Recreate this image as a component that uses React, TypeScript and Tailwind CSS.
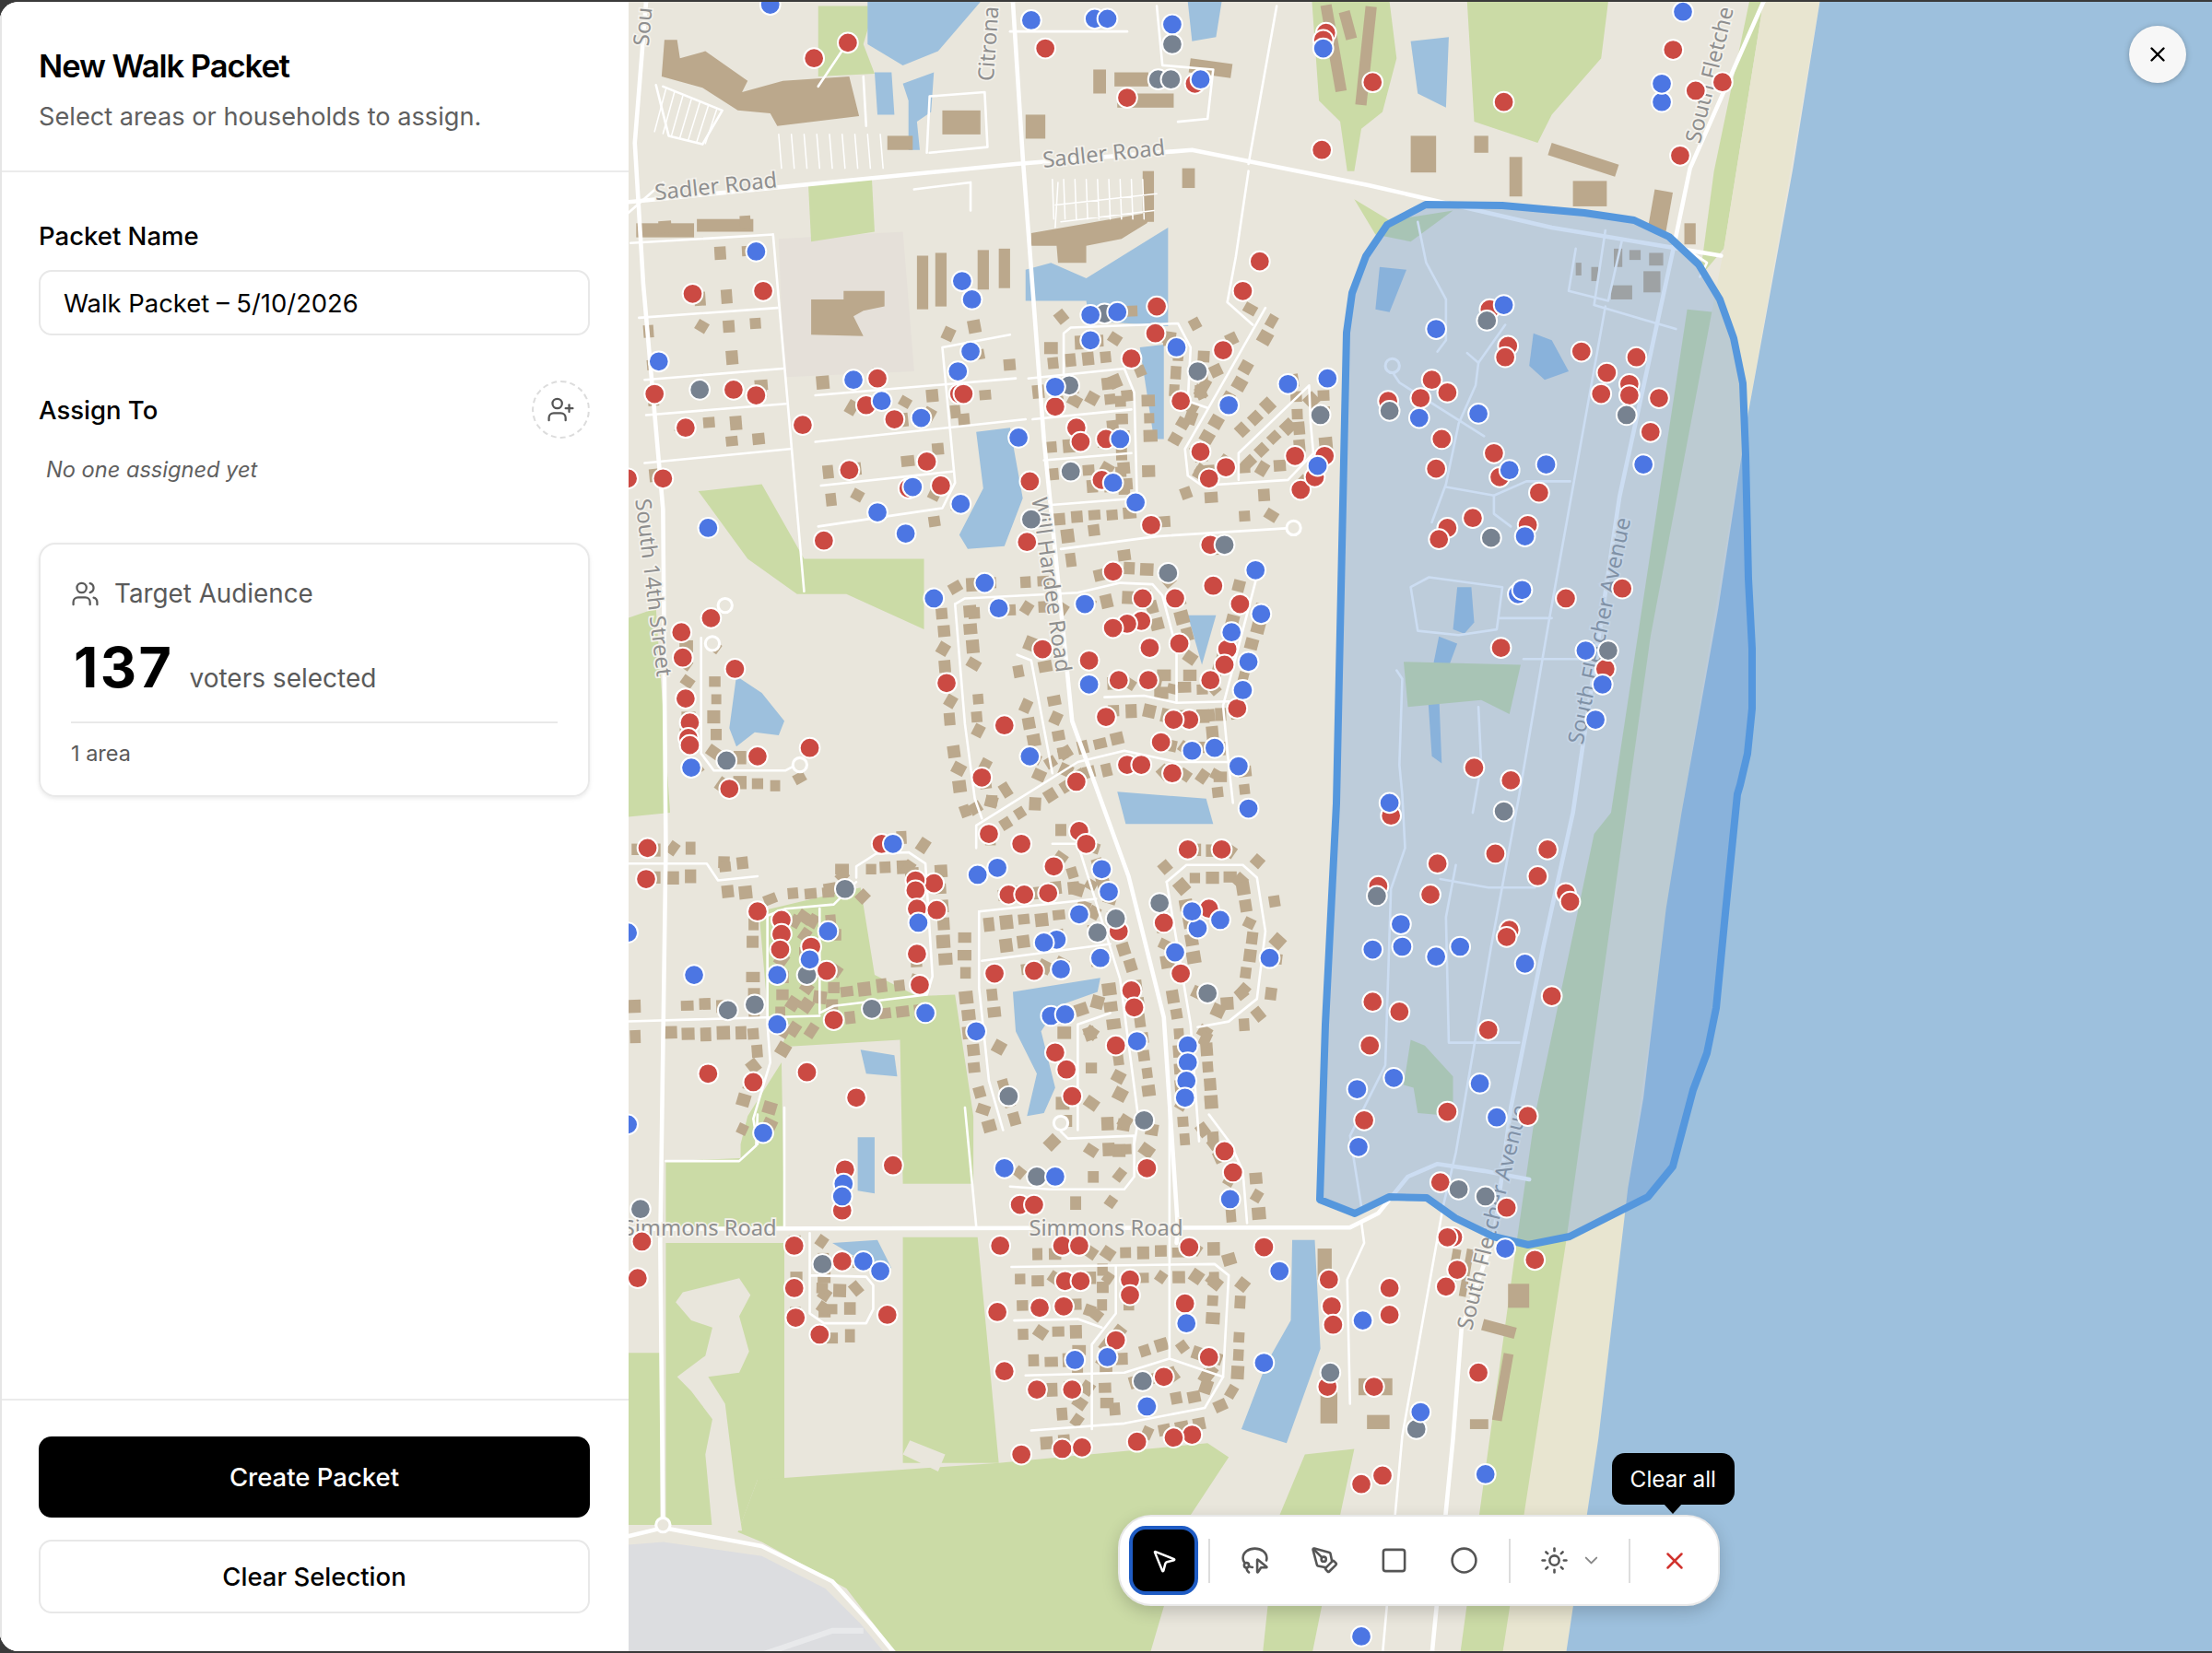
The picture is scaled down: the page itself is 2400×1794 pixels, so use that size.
import { ChevronDown, Circle, LassoSelect, MousePointer2, PenTool, Square, Sun, UserPlus, Users, X } from 'lucide-react'

// all map data is in a 1568-wide space, the svg group scales it up to the page
const K = 1.5306

const RED = [577,40,601,29,741,33,799,68,847,58,940,22,938,27,973,57,1066,71,937,105,1186,34,1202,63,1221,57,1191,109,491,207,541,205,893,184,881,205,820,216,819,235,867,247,802,253,464,278,520,275,536,279,622,267,614,286,634,296,680,278,683,278,763,302,748,287,766,312,784,310,486,302,569,300,602,332,657,326,644,345,667,343,730,340,851,319,857,338,869,330,918,322,939,322,922,346,932,337,837,283,781,339,445,338,470,338,584,382,728,383,816,371,858,385,789,404,860,414,833,423,879,427,810,423,809,439,799,441,789,444,739,459,815,458,836,455,772,467,870,459,868,470,793,481,814,481,671,483,858,481,877,501,784,507,712,513,843,509,832,509,823,525,483,447,504,437,484,465,521,473,486,494,489,511,488,522,489,527,574,529,537,535,517,558,799,541,809,541,831,547,696,550,763,553,701,590,765,588,770,597,724,597,747,613,842,601,866,601,625,597,459,600,458,622,662,625,649,623,649,630,650,643,664,644,715,633,726,633,743,632,857,643,825,653,793,659,537,645,554,651,554,661,553,672,575,670,586,687,650,675,652,697,705,689,733,687,802,701,837,689,804,713,591,722,791,740,502,760,572,759,534,766,607,777,756,757,748,745,760,776,813,827,868,815,874,830,633,825,599,828,597,857,723,853,733,853,455,879,452,905,563,882,597,893,563,912,629,931,564,933,581,945,709,882,753,882,765,882,843,883,896,883,755,907,766,907,801,906,801,917,840,923,707,929,737,926,754,925,791,949,857,961,712,971,735,984,760,984,825,975,845,1016,832,1018,724,1030,753,1026,767,1025,806,1021,965,1051,980,1045,1056,218,1069,244,1067,252,1121,248,1160,252,1139,263,1155,271,1155,279,1135,278,1176,281,1170,305,1015,268,1026,277,984,283,1007,281,1022,310,1018,331,1059,320,1063,337,1091,348,1044,366,1083,371,1026,373,1020,381,1110,423,1150,416,1064,458,1138,473,1045,543,1071,552,1097,601,1019,611,1060,604,986,577,1090,620,977,627,1014,633,1110,632,1113,638,1070,658,1068,663,1100,705,992,716,973,709,1055,729,971,740,967,793,1026,787,1083,790,1021,837,1068,855,1088,892,1030,876,1026,876,1033,899,1025,911,942,906,944,925,945,938,985,912,985,931,1048,972,941,982,974,982]
const BLUE = [546,2,731,13,776,12,785,12,831,16,851,55,938,33,1193,7,1178,71,1178,58,536,177,682,198,689,211,467,255,773,222,792,220,773,240,834,245,688,248,679,262,605,268,625,283,653,295,748,273,871,286,913,271,941,267,722,309,794,310,647,344,681,356,622,362,789,341,805,355,642,377,502,373,934,329,698,412,662,423,708,430,769,427,890,403,894,434,873,447,885,468,881,488,772,484,845,531,861,529,878,542,730,535,490,543,885,572,633,597,781,615,707,614,693,619,786,631,749,665,740,667,765,647,849,657,865,651,845,645,587,659,651,653,574,679,551,690,752,686,780,678,900,678,833,674,492,690,551,725,656,717,692,730,745,719,755,718,806,737,842,740,842,752,841,765,840,777,541,802,445,660,445,796,598,838,597,847,712,827,748,833,872,849,612,893,624,900,907,900,841,937,762,963,785,961,896,965,813,996,966,935,1007,1000,1053,1044,965,1159,1066,215,1018,232,1048,292,1006,295,1070,332,1096,328,1081,379,1165,328,1076,420,1079,417,1124,460,1136,484,1131,509,985,568,993,654,973,672,1035,670,994,670,1018,677,1081,682,962,771,988,763,1049,767,1061,791,963,812,1067,884]
const GRAY = [831,30,821,55,830,55,783,221,849,262,758,272,496,275,936,293,759,333,731,367,868,385,828,405,515,538,599,629,822,639,791,650,778,660,572,690,516,715,535,711,618,714,856,703,715,776,811,793,735,833,454,856,583,895,810,978,943,972,1004,1012,1054,226,985,290,1153,293,1057,380,1140,460,1066,574,976,634,1034,842,1053,847]

const MAIN_ROADS = [
  'M445 142 L720 115 L845 105 L970 130 L1100 160 L1220 180',
  'M718 0 L725 110 L740 310 L760 510 L800 620 L825 720 L835 870 L834 880',
  'M458 0 L450 100 L456 200 L470 360 L472 600 L468 880 L470 1080',
  'M445 870 L957 869 L977 859 L998 833 L1019 824 L1052 829 L1084 835',
  'M1250 0 L1198 118 L1186 176 L1148 351 L1115 575 L1094 670 L1071 784 L1059 875 L1036 941 L1030 1019 L1015 1172',
  'M445 1088 L470 1082 L540 1095 L590 1120 L617 1150 L635 1172',
]

const PLAIN_STREETS = [
  [1138,216,1098,439,1077,562,1057,670,1032,816,1023,854,994,1017,980,1172],
  [1005,156,1011,185,1025,211,1025,240,1019,248],
  [1040,249,1048,256,1067,229],
  [1048,256,1046,272,1034,299,1025,342,1015,369],
  [984,258,992,270,1052,308],
  [1025,344,1059,350,1082,340,1113,340],
  [1059,350,1059,363,1071,372],
  [1000,415,1013,408,1065,415,1061,445,1034,449,1005,446,1000,415],
  [1063,437,1100,437],
  [1080,466,1136,466],
  [990,474,994,480,992,541,994,562,996,600,986,629,982,754,973,772,957,804,965,854],
  [1048,500,1050,541,1044,575],
  [1032,612,1025,649,1027,738,1077,738],
  [1021,622,1055,628,1088,628],
  [965,865,967,880,955,906,957,994],
  [885,120,876,181,870,213,888,229],
  [1138,162,1130,215,1188,232],
  [556,784,556,868],
  [684,784,692,868],
  [829,784,829,962],
  [472,822,524,822,536,811,537,789],
  [548,165,570,418],
  [905,3,885,115],
  [820,3,824,45,860,48,856,83,835,85],
  [716,21,799,21],
  [657,107,659,67,698,64,700,103,659,107],
  [612,53,614,88],
  [648,133,688,128,688,148],
  [580,60,600,30],
  [470,128,445,150],
  [470,60,512,77,498,101,474,95,465,59],
  [1117,175,1112,205,1140,212,1150,168],
  [1188,170,1210,185,1205,195],
]

// few houses here, the old part of town
const SPARSE_STREETS = [
  [447,171,548,165],[453,224,551,217],[457,268,555,260],[458,293,557,285],[457,327,560,317],
  [578,279,720,267],[578,312,727,296],[582,343,675,333],
  [752,388,820,379,917,373],
  [580,372,668,359,677,341,668,245,716,236],
]

const HOUSE_STREETS = [
  [729,267,797,260,804,277,806,352,741,357],[732,296,802,289],[740,325,802,320],
  [754,264,754,235,759,231,835,228,844,245,842,283,856,288],
  [897,217,863,277,840,317,842,336,852,343,913,339,931,320,929,298,928,272,878,320,878,339],
  [677,427,684,423,764,419,794,412,817,413,824,421,834,459,834,496],
  [677,427,684,512,691,565,696,579],
  [692,600,692,584,764,539,797,531,834,539,871,539],
  [783,493,811,492,834,497,871,496],
  [890,411,867,499,871,541,874,568],
  [721,463,731,467,746,547],
  [607,621,607,613,621,604,644,603,656,611,661,691,657,704,591,712,581,717],
  [544,648,557,643,591,640,607,624],
  [544,648,544,725,546,752,534,792,537,810],
  [444,723,581,719],[581,643,581,717],
  [497,451,497,533,506,545,557,545,566,540],
  [446,611,501,611,509,623,537,620],
  [694,645,694,699,701,765,711,800],[694,645,777,636],[696,680,787,668],
  [746,597,764,597,794,693,807,792,804,810],
  [827,624,844,725,850,808],
  [827,624,841,612,881,612,891,621,897,659,891,707,871,723,849,727],
  [787,717,764,725,764,800],
  [716,840,744,842,797,842,804,833,804,804,757,806,752,801],
  [857,789,872,809,881,829,884,866],
  [717,897,861,895,871,903,867,975,854,997,797,1008,731,1013],
  [727,974,797,972,829,962,867,975],
  [774,1012,774,952,791,930,791,897],
  [719,935,764,934,781,940],
  [574,873,574,930,584,937,614,937,619,927,619,910,614,904,574,903],
]

const ROUNDABOUTS = [470,1080,917,373,514,428,987,258,752,795,567,541,505,455]

// houses strung along the residential streets, same seed every run
function makeHouses(streets: number[][], skip: number, step: number) {
  let seed = 71
  const rnd = () => {
    seed = (seed * 16807) % 2147483647
    return seed / 2147483647
  }
  const out: { x: number; y: number; w: number; h: number; a: number }[] = []
  streets.forEach((s) => {
    for (let i = 0; i + 3 < s.length; i += 2) {
      const dx = s[i + 2] - s[i]
      const dy = s[i + 3] - s[i + 1]
      const len = Math.hypot(dx, dy)
      const a = (Math.atan2(dy, dx) * 180) / Math.PI
      for (let d = 6; d < len; d += step) {
        for (const side of [-1, 1]) {
          if (rnd() < skip) continue
          const t = d / len
          const off = 8.5 + rnd() * 2.5
          out.push({
            x: s[i] + dx * t + (side * off * -dy) / len,
            y: s[i + 1] + dy * t + (side * off * dx) / len,
            w: 7 + rnd() * 2.5,
            h: 7 + rnd() * 3,
            a: a + (rnd() < 0.2 ? 35 : 0),
          })
        }
      }
    }
  })
  return out
}

const HOUSES = [...makeHouses(HOUSE_STREETS, 0.25, 12.5), ...makeHouses(SPARSE_STREETS, 0.6, 19)]

const lots: string[] = []
for (let i = 0; i < 9; i++) {
  lots.push(`M${552 + i * 9} 94 l2 24`)
  lots.push(`M${746 + i * 8} 126 l1 28`)
}
for (let i = 0; i < 7; i++) lots.push(`M${472 + i * 6} ${62 + i * 2.4} l-8 ${30 - i}`)
lots.push('M748 144 L820 136 M752 156 L818 148 M750 128 L748 160')

function Dots({ list, fill }: { list: number[]; fill: string }) {
  const dots = []
  for (let i = 0; i < list.length; i += 2) {
    dots.push(<circle key={i} cx={list[i]} cy={list[i + 1]} r={7.1} fill={fill} stroke="#fff" strokeWidth={1.3} />)
  }
  return <g>{dots}</g>
}

function Label({ x, y, r, children }: { x: number; y: number; r: number; children: string }) {
  return (
    <text
      x={x}
      y={y}
      transform={`rotate(${r} ${x} ${y})`}
      textAnchor="middle"
      fontSize={15.5}
      fill="#8f8f8f"
      stroke="#f4f2ec"
      strokeWidth={2.2}
      paintOrder="stroke"
      className="font-['Noto_Sans',sans-serif]"
    >
      {children}
    </text>
  )
}

function MapArt() {
  return (
    <svg viewBox="682 0 1718 1790" className="block h-full w-full" preserveAspectRatio="none">
      <g transform={`scale(${K})`}>
        <rect x="445" y="0" width="1123" height="1172" fill="#e9e6dc" />

        {/* school yard */}
        <path d="M552 168 L640 163 L648 262 L556 266 Z" fill="#e5e0d9" />

        {/* parks */}
        <g fill="#cbdba6">
          <path d="M580 3 L620 3 L612 30 L620 51 L580 53 Z" />
          <path d="M930 0 L985 0 L990 40 L980 78 L965 90 L960 120 L955 120 L950 85 L935 70 Z" />
          <path d="M1040 0 L1140 0 L1135 40 L1100 80 L1090 100 L1045 85 Z" />
          <path d="M573 130 L618 125 L620 163 L575 170 Z" />
          <path d="M960 140 L985 155 L1030 148 L1000 170 L975 165 Z" />
          <path d="M495 347 L540 342 L570 395 L655 395 L655 445 L600 420 L565 420 L530 395 Z" />
          <path d="M445 437 L465 430 L475 575 L445 578 Z" />
          <path d="M538 645 L610 628 L620 690 L650 705 L677 704 L690 790 L690 838 L640 838 L638 736 L554 741 L560 725 L545 725 Z" />
          <path d="M525 810 L530 790 L554 752 L556 868 L472 870 L472 822 L525 820 Z" />
          <path d="M640 876 L693 876 L708 1036 L640 1036 Z" />
          <path d="M472 880 L556 880 L556 1056 L537 1048 L525 1080 L472 1080 Z" />
          <path d="M445 958 L468 958 L468 1080 L445 1080 Z" />
          <path d="M537 1048 L708 1036 L856 1022 L871 1032 L844 1073 L815 1172 L636 1172 L600 1125 L540 1092 L523 1085 Z" />
          <path d="M925 1030 L960 1026 L950 1073 L930 1172 L895 1172 L905 1078 Z" />
          <path d="M1196 218 L1215 220 L1176 440 L1160 575 L1130 800 L1106 1010 L1075 1124 L1065 1172 L1035 1172 L1075 880 L1088 790 L1130 590 L1142 575 Z" />
          <path d="M1240 0 L1250 0 L1222 175 L1205 195 L1215 120 Z" />
        </g>

        {/* sand blobs in the south park */}
        <g fill="#e9e6dc">
          <path d="M479 922 L484 915 L524 905 L532 917 L524 932 L531 957 L524 972 L502 975 L514 994 L521 1051 L526 1084 L505 1084 L500 1030 L505 1005 L490 985 L480 975 L500 960 L505 940 L490 935 Z" />
          <path d="M640 1030 L645 1020 L670 1030 L665 1042 Z" />
        </g>

        {/* beach + sea */}
        <path d="M1250 0 L1290 0 L1239 293 L1192 575 L1154 841 L1133 1019 L1110 1172 L1065 1172 L1110 880 L1170 450 L1222 175 Z" fill="#e8e5d0" />
        <path d="M1290 0 L1568 0 L1568 1172 L1110 1172 L1133 1019 L1154 841 L1165 777 L1181 643 L1192 575 L1218 430 L1239 293 L1271 118 Z" fill="#9dc0dd" />

        {/* ponds and lakes */}
        <g fill="#9dc0dd">
          <path d="M615 0 L695 0 L665 35 L640 45 L615 30 Z" />
          <path d="M620 50 L632 50 L634 80 L622 80 Z M640 58 L662 50 L660 78 L650 85 L652 105 L644 105 L644 70 Z" />
          <path d="M842 0 L866 0 L862 25 L845 28 Z" />
          <path d="M1000 28 L1027 25 L1025 75 L1005 65 Z" />
          <path d="M727 190 L745 185 L770 196 L828 160 L828 230 L772 226 L770 212 L727 212 Z" />
          <path d="M808 245 L825 243 L825 310 L818 310 Z" />
          <path d="M692 305 L716 302 L725 352 L712 386 L686 388 L680 378 L697 345 Z" />
          <path d="M842 435 L862 435 L852 470 Z" />
          <path d="M522 478 L540 490 L556 510 L552 520 L535 518 L522 528 L517 515 Z" />
          <path d="M792 560 L855 565 L860 583 L798 583 Z" />
          <path d="M610 743 L634 747 L636 762 L614 760 Z" />
          <path d="M718 702 L780 692 L778 702 L750 712 L738 730 L748 770 L740 788 L728 790 L735 760 L720 730 Z" />
          <path d="M608 805 L620 805 L620 845 L608 843 Z" />
          <path d="M590 880 L622 878 L632 898 L610 892 Z" />
          <path d="M916 878 L932 878 L936 955 L912 1022 L880 1012 L898 965 L915 935 Z" />
          <path d="M978 188 L997 190 L985 220 L975 218 Z" />
          <path d="M1087 235 L1100 240 L1112 262 L1095 268 L1084 258 Z" />
          <path d="M1033 415 L1043 415 L1045 440 L1038 448 L1030 445 Z" />
          <path d="M1020 450 L1033 455 L1020 490 L1022 540 L1015 535 L1012 490 Z" />
        </g>

        {/* green strip inside the area */}
        <path d="M995 468 L1078 470 L1070 505 L1050 495 L998 500 Z" fill="#cbdba6" />
        <path d="M1000 736 L1010 740 L1030 762 L1030 790 L1005 788 L1002 770 L995 768 Z" fill="#cbdba6" />

        {/* buildings */}
        <g fill="#bba88c">
          <path d="M471 27 L480 27 L482 40 L500 35 L530 56 L526 64 L555 56 L602 53 L609 81 L551 88 L546 79 L523 77 L498 61 L469 53 Z" />
          <path d="M731 164 L817 149 L813 157 L795 168 L770 173 L770 185 L750 185 L749 173 L731 173 Z" />
          <path d="M575 211 L598 211 L598 205 L627 205 L627 216 L612 219 L605 223 L612 237 L575 236 Z" />
          <rect x="451" y="157" width="41" height="10" />
          <rect x="494" y="154" width="40" height="9" />
          <rect x="668" y="77" width="27" height="17" />
          <rect x="727" y="80" width="14" height="17" />
          <rect x="629" y="95" width="18" height="10" />
          <rect x="792" y="65" width="40" height="10" />
          <rect x="790" y="50" width="24" height="10" />
          <rect x="775" y="48" width="9" height="17" />
          <rect x="650" y="180" width="8" height="38" />
          <rect x="663" y="178" width="8" height="38" />
          <rect x="693" y="176" width="8" height="28" />
          <rect x="708" y="175" width="8" height="28" />
          <rect x="810" y="120" width="8" height="36" />
          <rect x="838" y="118" width="9" height="14" />
          <rect x="844" y="40" width="30" height="10" transform="rotate(8 844 40)" />
          <rect x="936" y="3" width="8" height="62" transform="rotate(-10 936 3)" />
          <rect x="968" y="3" width="8" height="70" transform="rotate(6 968 3)" />
          <rect x="949" y="8" width="8" height="20" transform="rotate(-15 949 8)" />
          <rect x="1000" y="95" width="18" height="26" />
          <rect x="1045" y="95" width="10" height="12" />
          <rect x="1100" y="100" width="50" height="9" transform="rotate(18 1100 100)" />
          <rect x="1070" y="110" width="9" height="28" />
          <rect x="1115" y="127" width="24" height="18" />
          <rect x="1173" y="133" width="13" height="28" transform="rotate(10 1173 133)" />
          <rect x="1194" y="157" width="8" height="15" />
          <rect x="1144" y="175" width="6" height="13" />
          <rect x="1155" y="176" width="8" height="7" />
          <rect x="1169" y="178" width="10" height="9" />
          <rect x="1165" y="191" width="12" height="15" />
          <rect x="1142" y="201" width="15" height="10" />
          <rect x="1117" y="185" width="4" height="9" />
          <rect x="1128" y="188" width="5" height="10" />
          <rect x="1069" y="909" width="15" height="17" />
          <rect x="1052" y="934" width="24" height="8" transform="rotate(15 1052 934)" />
          <rect x="1066" y="958" width="7" height="48" transform="rotate(10 1066 958)" />
          <rect x="934" y="884" width="10" height="22" />
          <rect x="936" y="970" width="12" height="38" />
          <rect x="969" y="1002" width="16" height="10" />
          <rect x="1042" y="1005" width="13" height="7" />
          <rect x="963" y="976" width="24" height="12" />
          <rect x="1030" y="884" width="6" height="30" transform="rotate(10 1030 884)" />
          <rect x="1040" y="884" width="5" height="34" transform="rotate(10 1040 884)" />
          {HOUSES.map((h, i) => (
            <rect key={i} x={h.x - h.w / 2} y={h.y - h.h / 2} width={h.w} height={h.h} transform={`rotate(${h.a} ${h.x} ${h.y})`} />
          ))}
        </g>

        {/* roads */}
        <g fill="none" stroke="#fff" strokeLinecap="round" strokeLinejoin="round">
          <path d={lots.join(' ')} strokeWidth={1} />
          {PLAIN_STREETS.concat(HOUSE_STREETS, SPARSE_STREETS).map((s, i) => (
            <polyline key={i} points={s.join(' ')} strokeWidth={1.7} />
          ))}
          {MAIN_ROADS.map((d) => (
            <path key={d} d={d} strokeWidth={3} />
          ))}
        </g>
        <g fill="#e9e6dc" stroke="#fff" strokeWidth={2}>
          {ROUNDABOUTS.map((v, i) => (i % 2 === 0 ? <circle key={i} cx={v} cy={ROUNDABOUTS[i + 1]} r={5} /> : null))}
        </g>

        {/* airfield corner */}
        <path d="M445 1094 L470 1092 L540 1102 L585 1125 L610 1150 L628 1172 L445 1172 Z" fill="#dcdde0" />
        <path d="M540 1172 L590 1155 L612 1155" fill="none" stroke="#e8e9eb" strokeWidth={4} />

        <Label x={508} y={136} r={-6}>Sadler Road</Label>
        <Label x={783} y={113} r={-6}>Sadler Road</Label>
        <Label x={706} y={30} r={-86}>Citrona</Label>
        <Label x={458} y={416} r={83}>South 14th Street</Label>
        <Label x={740} y={414} r={82}>Will Hardee Road</Label>
        <Label x={1139} y={447} r={-78}>South Fletcher Avenue</Label>
        <Label x={1217} y={53} r={-76}>South Fletche</Label>
        <Label x={1063} y={863} r={-76}>South Fletcher Avenue</Label>
        <Label x={496} y={875} r={0}>Simmons Road</Label>
        <Label x={784} y={875} r={0}>Simmons Road</Label>
        <Label x={461} y={18} r={-85}>Sou</Label>
      </g>

      {/* selected area, coordinates are page pixels */}
      <path
        d="M1547 220 L1630 221 L1719 229 L1773 237 L1811 255 L1843 285 L1866 323 L1881 365 L1891 414 L1894 492 L1897 626 L1901 702 L1901 767 L1896 816 L1888 850 L1885 860 L1872 989 L1862 1092 L1852 1141 L1837 1181 L1824 1230 L1815 1264 L1788 1297 L1703 1340 L1658 1349 L1620 1340 L1579 1320 L1548 1298 L1507 1297 L1470 1315 L1432 1300 L1438 1110 L1450 870 L1461 359 L1467 316 L1482 276 L1505 242 Z"
        fill="#5f95d8"
        fillOpacity={0.32}
        stroke="#5597dd"
        strokeWidth={8}
        strokeLinejoin="round"
      />

      <g transform={`scale(${K})`}>
        <Dots list={RED} fill="#cb4a43" />
        <Dots list={GRAY} fill="#778290" />
        <Dots list={BLUE} fill="#4c76e3" />
      </g>
    </svg>
  )
}

export default function App() {
  return (
    <div className="h-[1794px] w-[2400px] overflow-hidden bg-[#3a3a3a] py-[2px] font-['Inter',sans-serif]">
      <div className="flex h-full overflow-hidden rounded-l-[20px] bg-white">
        <aside className="flex h-full w-[682px] shrink-0 flex-col border-l-2 border-[#e6e6e6] bg-white">
          <header className="h-[185px] border-b-2 border-[#ebebeb] pt-[48px] pr-[42px] pl-[40px]">
            <h1 className="text-[34.5px] leading-[44px] font-semibold tracking-[-0.03em] text-black">New Walk Packet</h1>
            <p className="mt-[15px] text-[27.2px] leading-[36px] text-[#5f5f5f]">Select areas or households to assign.</p>
          </header>

          <div className="flex-1 pt-[52px] pr-[42px] pl-[40px]">
            <label className="block text-[27.5px] leading-[34px] font-medium text-black">Packet Name</label>
            <div className="mt-[20px] flex h-[71px] items-center rounded-[14px] border-2 border-[#e8e8e8] pt-[3px] pl-[25px] text-[27.4px] text-black">
              Walk Packet – 5/10/2026
            </div>

            <div className="mt-[49px] flex h-[63px] items-center justify-between">
              <span className="pt-[2px] text-[27.5px] font-medium text-black">Assign To</span>
              <button className="flex h-[63px] w-[63px] items-center justify-center rounded-full border-2 border-dashed border-[#dcdcdc] text-[#555]">
                <UserPlus className="h-[31px] w-[31px]" strokeWidth={1.75} />
              </button>
            </div>
            <p className="mt-[18px] pl-[8px] text-[23.6px] leading-[32px] text-[#5f5f5f] italic">No one assigned yet</p>

            <section className="mt-[63px] h-[276px] rounded-[18px] border-2 border-[#e9e9e9] px-[33px] pt-[36px] shadow-[0_2px_4px_rgba(0,0,0,0.08)]">
              <div className="flex items-center gap-[16px] text-[#5a5a5a]">
                <Users className="h-[31px] w-[31px]" strokeWidth={1.75} />
                <span className="text-[27.8px] leading-[34px]">Target Audience</span>
              </div>
              <div className="mt-[28px] flex items-baseline gap-[17px]">
                <span className="pl-[3px] text-[61px] leading-[70px] font-bold tracking-[0.04em] text-black">137</span>
                <span className="text-[28px] text-[#5a5a5a]">voters selected</span>
              </div>
              <div className="mt-[24px] border-t-2 border-[#e9e9e9] pt-[18px] text-[23.5px] leading-[30px] text-[#5a5a5a]">1 area</div>
            </section>
          </div>

          <footer className="flex h-[274px] flex-col gap-[24px] border-t-2 border-[#ebebeb] pt-[39px] pr-[42px] pl-[40px]">
            <button className="h-[88px] rounded-[14px] bg-black pt-[2px] text-[27.5px] font-medium text-white">Create Packet</button>
            <button className="h-[80px] rounded-[14px] border-2 border-[#e8e8e8] bg-white pt-[2px] text-[27.5px] font-medium text-black">Clear Selection</button>
          </footer>
        </aside>

        <main className="relative flex-1">
          <MapArt />

          <button className="absolute top-[26px] right-[28px] flex h-[62px] w-[62px] items-center justify-center rounded-full bg-[#f7f7f7] text-black shadow-[0_1px_6px_rgba(0,0,0,0.25)]">
            <X className="h-[26px] w-[26px]" strokeWidth={2.25} />
          </button>

          <div className="absolute bottom-[49px] left-[531px] flex h-[99px] w-[653px] items-center rounded-[36px] border-2 border-[#e8e8e8] bg-white pl-[10px] shadow-[0_6px_18px_rgba(0,0,0,0.18)]">
            <button className="flex h-[75px] w-[75px] items-center justify-center rounded-[18px] border-4 border-[#1f5cc4] bg-black text-white">
              <MousePointer2 className="h-[30px] w-[30px]" />
            </button>
            <span className="ml-[11px] h-[48px] w-[2px] bg-[#dddddd]" />
            <div className="ml-[10px] flex text-[#555]">
              <button className="flex h-[75px] w-[76px] items-center justify-center"><LassoSelect className="h-[31px] w-[31px]" /></button>
              <button className="flex h-[75px] w-[76px] items-center justify-center"><PenTool className="h-[31px] w-[31px]" /></button>
              <button className="flex h-[75px] w-[75px] items-center justify-center"><Square className="h-[31px] w-[31px]" /></button>
              <button className="flex h-[75px] w-[76px] items-center justify-center"><Circle className="h-[31px] w-[31px]" /></button>
            </div>
            <span className="ml-[11px] h-[48px] w-[2px] bg-[#dddddd]" />
            <button className="flex h-[75px] w-[128px] items-center justify-center gap-[13px] pl-[2px] text-[#555]">
              <Sun className="h-[31px] w-[31px]" />
              <ChevronDown className="h-[23px] w-[23px] text-[#888]" />
            </button>
            <span className="h-[48px] w-[2px] bg-[#dddddd]" />
            <button className="flex h-[75px] flex-1 items-center justify-center text-[#d1332e]"><X className="h-[30px] w-[30px]" /></button>

            <div className="absolute -top-[69px] right-[-18px] rounded-[14px] bg-black px-[20px] py-[11px] text-[24.4px] leading-[34px] text-white">
              Clear all
              <span className="absolute -bottom-[10px] left-1/2 h-0 w-0 -translate-x-1/2 border-x-[10px] border-t-[11px] border-x-transparent border-t-black" />
            </div>
          </div>
        </main>
      </div>
    </div>
  )
}
